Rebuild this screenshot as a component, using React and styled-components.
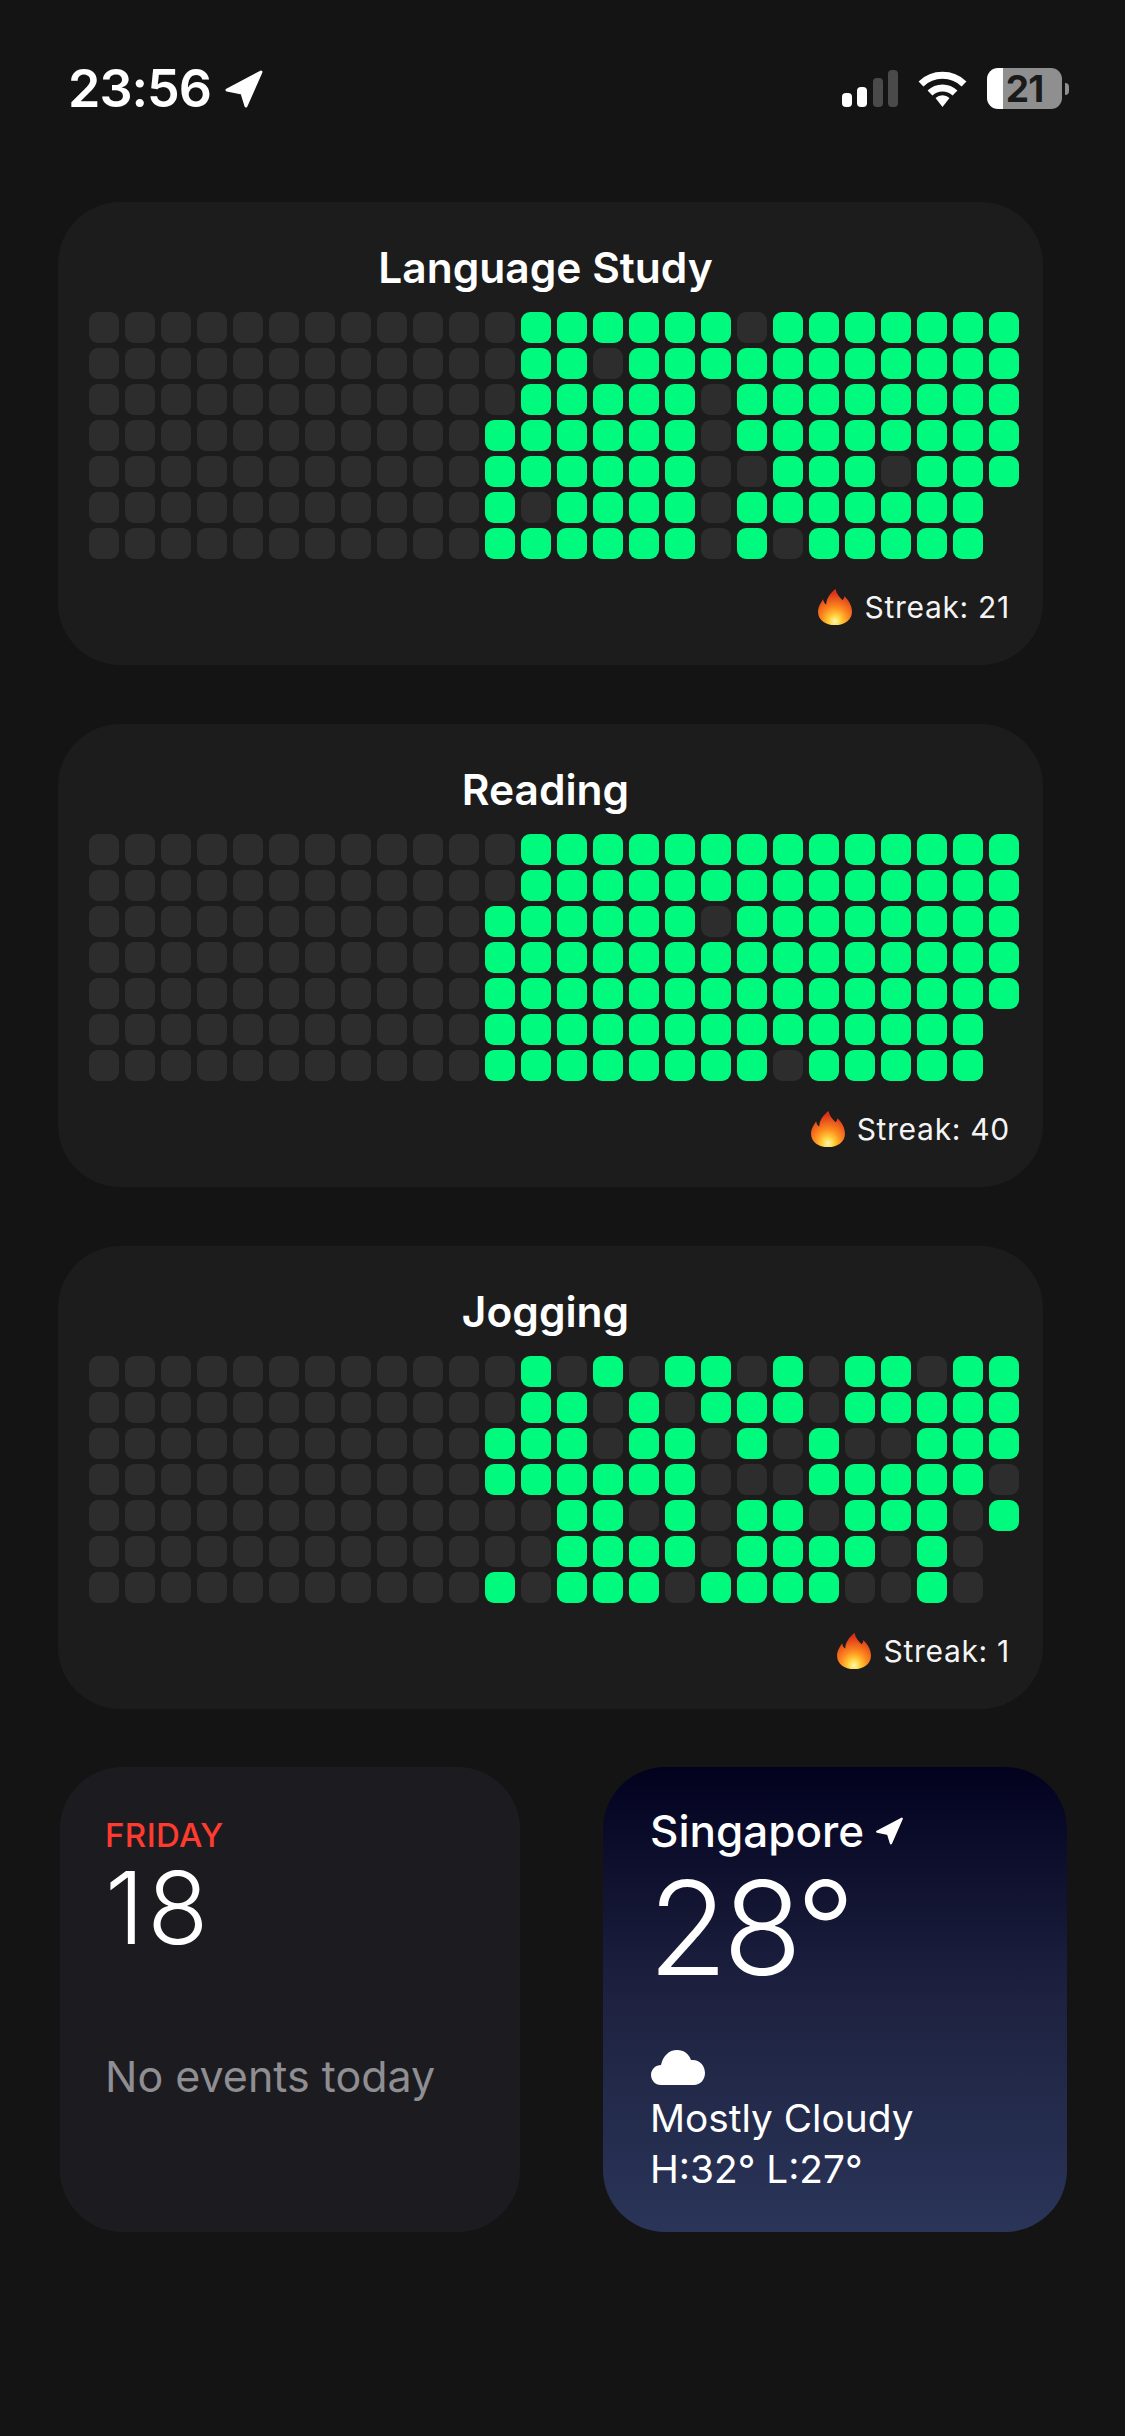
import React from 'react'
import styled, { createGlobalStyle } from 'styled-components'

const GlobalStyle = createGlobalStyle`
    html, body {
        margin: 0;
        padding: 0;
        background: #141414;
    }
    body {
        font-family: "Inter", "Liberation Sans", sans-serif;
        color: #fff;
    }
`

// only the last 15 columns are written out, the first 11 are always empty
// # done, o missed, . no cell yet
const habits = [
    {
        title: 'Language Study',
        streak: 21,
        rows: [
            'o######o#######',
            'o##o###########',
            'o#####o########',
            '######o########',
            '######oo###o###',
            '#o####o#######.',
            '######o#o#####.',
        ],
    },
    {
        title: 'Reading',
        streak: 40,
        rows: [
            'o##############',
            'o##############',
            '######o########',
            '###############',
            '###############',
            '##############.',
            '########o#####.',
        ],
    },
    {
        title: 'Jogging',
        streak: 1,
        rows: [
            'o#o#o##o#o##o##',
            'o##o#o###o#####',
            '###o##o#o#oo###',
            '######ooo#####o',
            'oo##o#o##o###o#',
            'oo####o####o#o.',
            '#o###o####oo#o.',
        ],
    },
]

const Page = styled.div`
    width: 1125px;
    min-height: 2436px;
    box-sizing: border-box;
    padding-top: 68px;
    background: #141414;
`
const StatusBar = styled.div`
    height: 41px;
    display: flex;
    align-items: center;
    justify-content: space-between;
    padding: 0 56px 0 68px;
`
const StatusLeft = styled.div`
    display: flex;
    align-items: center;
    gap: 13px;
`
const StatusRight = styled.div`
    display: flex;
    align-items: center;
`
const Time = styled.span`
    font-size: 52px;
    line-height: 41px;
    font-weight: 600;
    letter-spacing: -1px;
`
const Signal = styled.div`
    display: flex;
    align-items: flex-end;
    gap: 5.5px;
    height: 37px;
    margin-right: 19px;
`
const SignalBar = styled.span`
    width: 10px;
    height: ${p => p.$h}px;
    border-radius: 4px;
    background: ${p => (p.$on ? '#fff' : '#4a4a4a')};
`
const Battery = styled.div`
    width: 75px;
    height: 41px;
    margin-left: 19px;
    border-radius: 11px;
    display: flex;
    align-items: center;
    justify-content: center;
    box-sizing: border-box;
    background: linear-gradient(90deg, #fff 0, #fff 16px, #8f8f8f 16px);
    color: #1a1a1a;
    font-size: 37px;
    font-weight: 700;
    letter-spacing: -1px;
`
const BatteryNub = styled.span`
    width: 4px;
    height: 12px;
    margin-left: 3px;
    border-radius: 0 6px 6px 0;
    background: #8f8f8f;
`
const Cards = styled.div`
    display: flex;
    flex-direction: column;
    gap: 59px;
    margin: 93px 0 0 58px;
    width: 985px;
`
const Card = styled.section`
    height: 463px;
    box-sizing: border-box;
    padding: 41px 24px 0 31px;
    border-radius: 62px;
    background: #1c1c1c;
`
const Title = styled.h2`
    margin: 0;
    height: 50px;
    padding-right: 17px;
    font-size: 42.5px;
    line-height: 50px;
    font-weight: 600;
    text-align: center;
`
const Grid = styled.div`
    display: grid;
    grid-template-columns: repeat(26, 30px);
    grid-auto-rows: 30.5px;
    column-gap: 6px;
    row-gap: 5.5px;
    margin-top: 19px;
`
const Cell = styled.span`
    border-radius: 9px;
    background: ${p => (p.$state === '#' ? '#00fa7e' : p.$state === 'o' ? '#2d2d2d' : 'transparent')};
`
const Streak = styled.div`
    display: flex;
    align-items: center;
    justify-content: flex-end;
    gap: 12px;
    margin-top: 30px;
    padding-right: 9px;
    font-size: 30px;
    line-height: 36px;
    letter-spacing: 0.7px;
    color: #f4f4f4;
`
const BottomRow = styled.div`
    display: flex;
    gap: 83px;
    margin: 58px 0 0 60px;
`
const Calendar = styled.section`
    width: 460px;
    height: 465px;
    box-sizing: border-box;
    padding: 48px 45px 0;
    border-radius: 62px;
    background: #1c1c20;
`
const Day = styled.div`
    font-size: 33px;
    line-height: 40px;
    font-weight: 500;
    letter-spacing: 0.4px;
    color: #ff3b30;
`
const DateNumber = styled.div`
    margin-top: 8px;
    font-size: 100px;
    line-height: 90px;
    font-weight: 300;
    letter-spacing: 3px;
`
const NoEvents = styled.div`
    margin-top: 97px;
    font-size: 43px;
    line-height: 52px;
    color: #8e8e93;
`
const Weather = styled.section`
    width: 464px;
    height: 465px;
    box-sizing: border-box;
    padding: 38px 47px 0;
    border-radius: 62px;
    background: linear-gradient(180deg, #02021f 0%, #1e2240 50%, #2a3559 100%);
`
const City = styled.div`
    display: flex;
    align-items: center;
    gap: 11px;
    font-size: 44px;
    line-height: 52px;
    font-weight: 500;
`
const Temperature = styled.div`
    margin: 6px 0 0 -2px;
    font-size: 130px;
    line-height: 130px;
    font-weight: 300;
    letter-spacing: -5px;
`
const CloudWrap = styled.div`
    height: 35px;
    margin-top: 57px;
    padding-left: 1px;
    svg {
        display: block;
    }
`
const Condition = styled.div`
    margin-top: 8px;
    font-size: 38.8px;
    line-height: 50px;
    font-weight: 400;
`
const HighLow = styled.div`
    font-size: 38.8px;
    line-height: 52px;
`

function Arrow({ width, height }) {
    return (
        <svg width={width} height={height} viewBox="0 0 40 38">
            <path
                d="M37 2 L3 20 L18 23 L22 36 Z"
                fill="#fff"
                stroke="#fff"
                strokeWidth="3"
                strokeLinejoin="round"
            />
        </svg>
    )
}

function Wifi() {
    return (
        <svg width="51" height="37" viewBox="0 0 51 37">
            <path d="M4 14 A31 31 0 0 1 47 14" fill="none" stroke="#fff" strokeWidth="7" />
            <path d="M13 23 A18 18 0 0 1 38 23" fill="none" stroke="#fff" strokeWidth="7" />
            <path d="M18.5 28 A10 10 0 0 1 32.5 28 L25.5 37 Z" fill="#fff" />
        </svg>
    )
}

function Flame({ id }) {
    return (
        <svg width="34" height="36" viewBox="0 0 33 35">
            <defs>
                <radialGradient id={id} cx="50%" cy="90%" r="80%">
                    <stop offset="0%" stopColor="#fff7b8" />
                    <stop offset="20%" stopColor="#ffd53f" />
                    <stop offset="48%" stopColor="#ff8d1f" />
                    <stop offset="100%" stopColor="#d9301a" />
                </radialGradient>
            </defs>
            <path
                d="M17 0 C18 5 21 8 24 11 C25 9.5 25.5 8.5 25.5 7 C30 11 33 16 33 22 C33 30 26 35 16.5 35 C7 35 0 30 0 22 C0 17 3 13 5 10 C5.5 13 6.5 14.5 8 15 C8 9 12 4 17 0 Z"
                fill={`url(#${id})`}
            />
        </svg>
    )
}

function Cloud() {
    return (
        <svg width="54" height="35" viewBox="0 0 54 35">
            <path
                d="M10 35 C4 35 0 30 0 25 C0 19 5 15 10 15 C12 6 18 0 26 0 C33 0 38 4 40 10 C48 9 54 15 54 23 C54 30 49 35 43 35 Z"
                fill="#fff"
            />
        </svg>
    )
}

function HabitCard({ habit, index }) {
    // rows are written left to right, empty columns put in front
    const cells = habit.rows.flatMap(row => ('ooooooooooo' + row).split(''))

    return (
        <Card>
            <Title>{habit.title}</Title>
            <Grid>
                {cells.map((state, i) => (
                    <Cell key={i} $state={state} />
                ))}
            </Grid>
            <Streak>
                <Flame id={`flame-${index}`} />
                <span>Streak: {habit.streak}</span>
            </Streak>
        </Card>
    )
}

export default function App() {
    return (
        <Page>
            <GlobalStyle />
            <StatusBar>
                <StatusLeft>
                    <Time>23:56</Time>
                    <Arrow width={40} height={38} />
                </StatusLeft>
                <StatusRight>
                    <Signal>
                        <SignalBar $h={14} $on />
                        <SignalBar $h={20} $on />
                        <SignalBar $h={29} />
                        <SignalBar $h={37} />
                    </Signal>
                    <Wifi />
                    <Battery>21</Battery>
                    <BatteryNub />
                </StatusRight>
            </StatusBar>

            <Cards>
                {habits.map((habit, i) => (
                    <HabitCard key={habit.title} habit={habit} index={i} />
                ))}
            </Cards>

            <BottomRow>
                <Calendar>
                    <Day>FRIDAY</Day>
                    <DateNumber>18</DateNumber>
                    <NoEvents>No events today</NoEvents>
                </Calendar>
                <Weather>
                    <City>
                        Singapore
                        <Arrow width={29} height={28} />
                    </City>
                    <Temperature>28°</Temperature>
                    <CloudWrap>
                        <Cloud />
                    </CloudWrap>
                    <Condition>Mostly Cloudy</Condition>
                    <HighLow>H:32° L:27°</HighLow>
                </Weather>
            </BottomRow>
        </Page>
    )
}
